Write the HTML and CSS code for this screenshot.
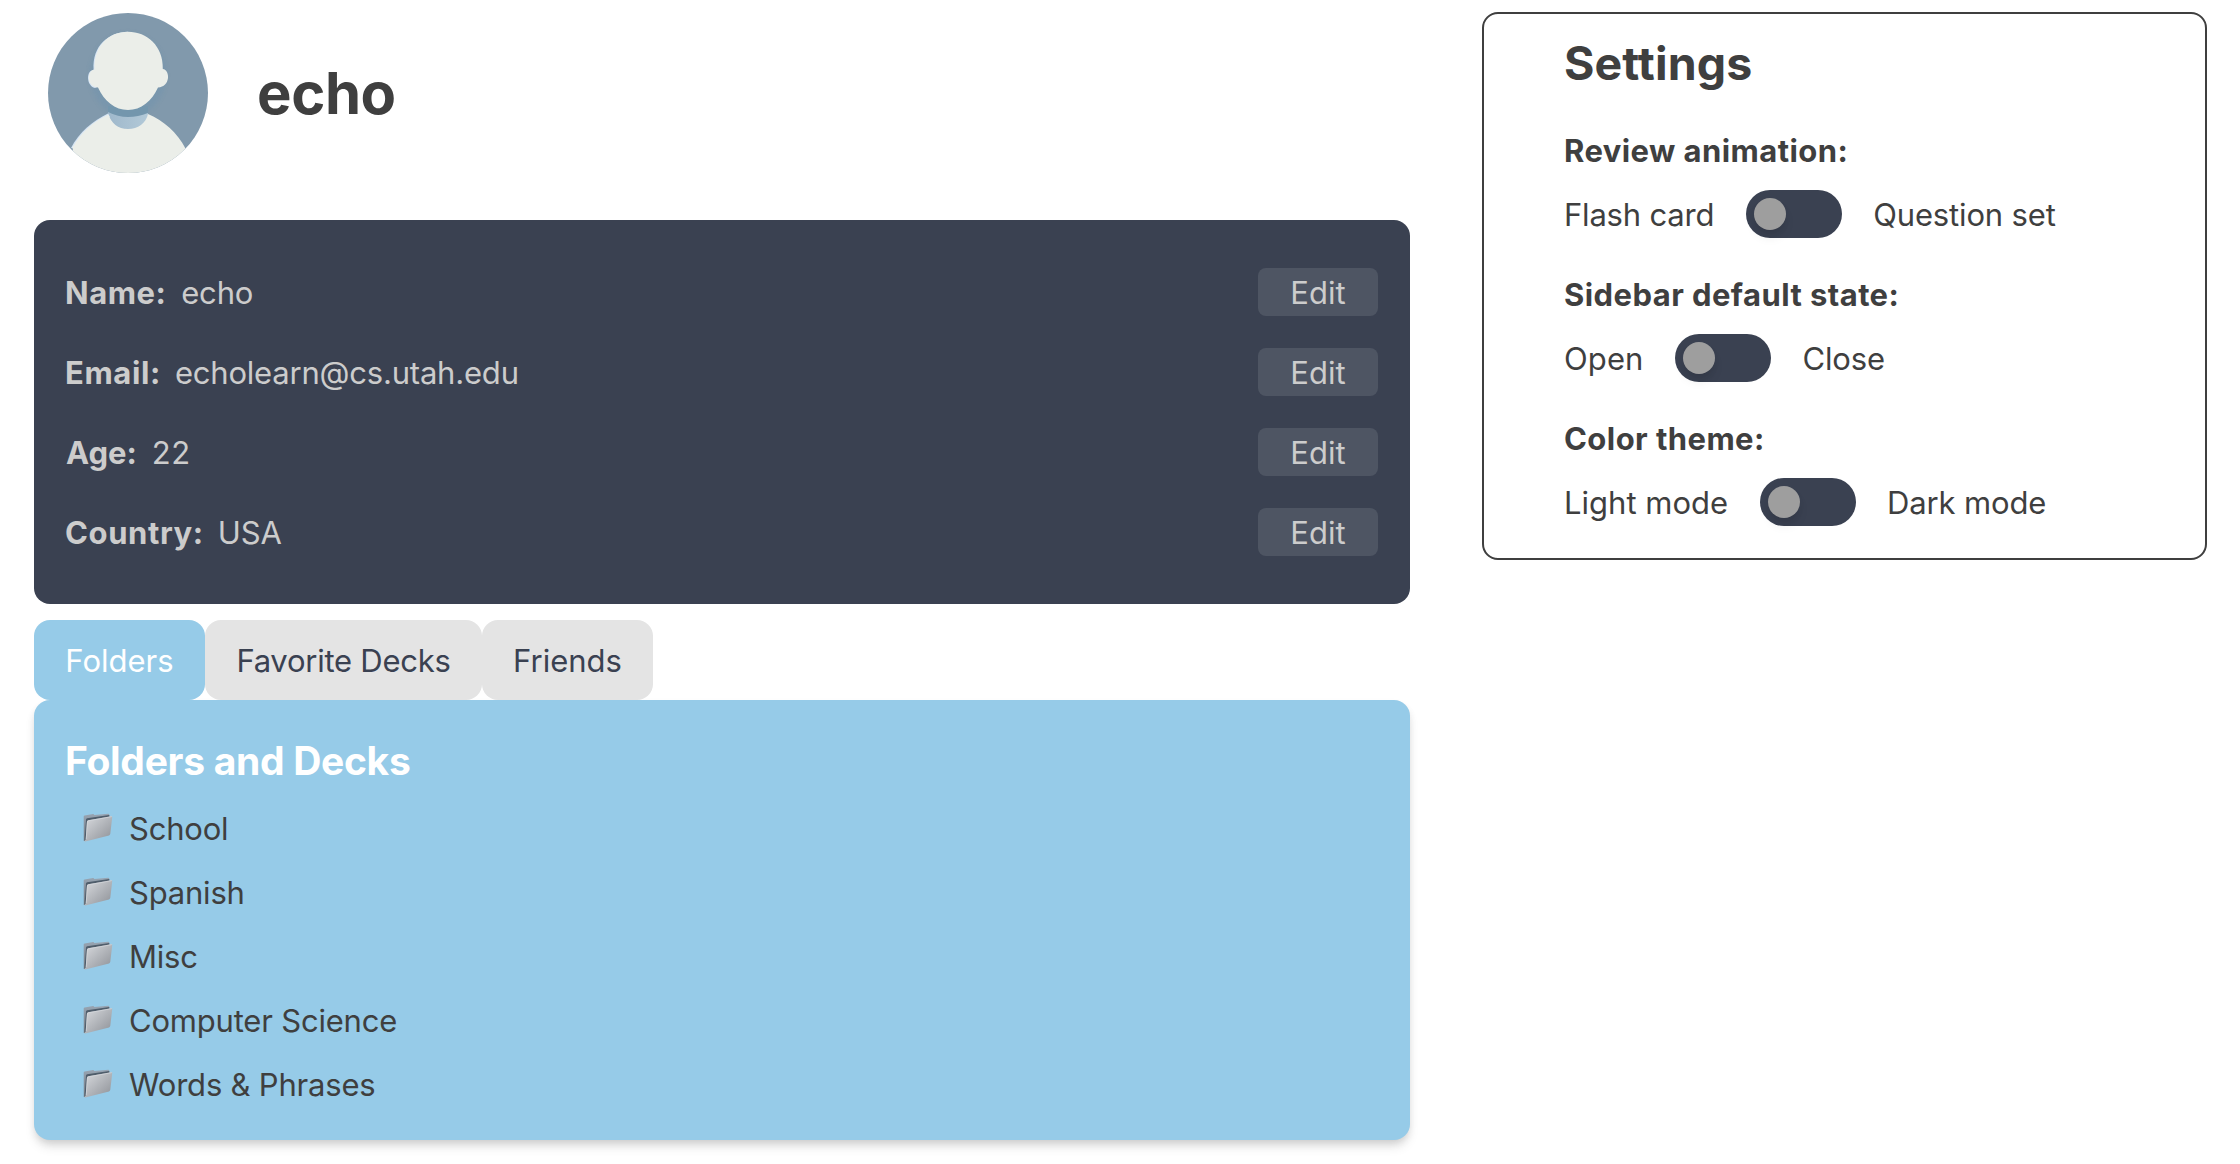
FILE: index.html
```html
<!DOCTYPE html>
<html lang="en">
<head>
<meta charset="utf-8">
<title>Profile</title>
<link rel="stylesheet" href="styles.css">
</head>
<body>
<svg class="defs" aria-hidden="true">
  <defs>
    <linearGradient id="front" x1="0" y1="0" x2="1" y2="1">
      <stop offset="0" stop-color="#d9dbdf"/><stop offset=".5" stop-color="#b2b5ba"/><stop offset="1" stop-color="#8d9096"/>
    </linearGradient>
    <linearGradient id="back" x1="0" y1="0" x2="0" y2="1">
      <stop offset="0" stop-color="#98a5b3"/><stop offset="1" stop-color="#70767e"/>
    </linearGradient>
    <symbol id="folder" viewBox="0 0 30 30">
      <path fill="url(#back)" d="M.7 3.6Q.7 2.7 1.6 2.5L10 1.1Q11 1 11.3 2L25.2.8Q26.3.8 26.3 2V6L4 27.8.8 28Z"/>
      <path fill="#4f5d6b" d="M3 6.500Q3.100 5.500 4.200 5.200L26.300 2V5L5 10 3.200 27H1.600Z"/>
      <path fill="url(#front)" d="M4 8.600Q4.100 7.600 5.100 7.300L28.300 3.200Q29.400 3.100 29.200 4.200L27.300 20.800Q27.100 22 26 22.400L2.200 28.600Q1.200 28.800 1.900 27.600 2.600 27 2.800 25.600Z"/>
      <path fill="none" stroke="#d5d8dc" stroke-width=".7" d="M3.200 26 4.400 8.700Q4.500 8 5.400 7.800L28.800 3.600"/>
    </symbol>
  </defs>
</svg>
<div class="page">
  <main class="main">
    <header class="profile">
      <svg class="avatar" viewBox="0 0 160 160">
        <defs>
          <clipPath id="round"><circle cx="80" cy="80" r="80"/></clipPath>
          <linearGradient id="neck" x1="0" y1="0" x2="1" y2="0"><stop offset="0" stop-color="#9fb8cb"/><stop offset="1" stop-color="#b2c9d8"/></linearGradient>
          <filter id="soft" x="-20%" y="-20%" width="140%" height="140%"><feGaussianBlur stdDeviation="2"/></filter>
        </defs>
        <g clip-path="url(#round)">
          <rect width="160" height="160" fill="#8199ac"/>
          <ellipse cx="80" cy="62" rx="38" ry="42" fill="#6d93af" opacity=".4" filter="url(#soft)"/>
          <path fill="url(#neck)" d="M60 98H100V103C98 111 90 117 80 117S62 111 60 103Z"/>
          <path fill="#7396ad" d="M60 93H100V100Q90 104 80 104T60 99Z"/>
          <path fill="#d5e4f4" d="M23 135C31 119 45 108 60 100.500L62 104 30 136Z"/>
          <path fill="#ebeee9" d="M24.500 134.500C33 119 46 108 60.500 101.500C63 110 70 116 80 116S98 110 100 101C116 108 129 119 137.500 135.500L130 170H30Z"/>
          <path fill="#d5e4f4" d="M45.600 57C44 32 61 19 80 18.700L79 60 47 75C38 73 38 57 45.600 57Z"/>
          <path fill="#ebeee9" d="M46.500 56.500C45.500 33 61 18.700 80 18.700S115.500 33 114.800 56C122.500 57 122.500 74 110 74.500C104 88 93 97 80 97S56 88 50 74.500C38 74 39 57 46.500 56.500Z"/>
        </g>
      </svg>
      <h1 class="username">echo</h1>
    </header>

    <section class="info">
      <div class="info-row"><div class="field"><b class="wide">Name:</b><span>echo</span></div><button class="edit">Edit</button></div>
      <div class="info-row"><div class="field"><b>Email:</b><span>echolearn@cs.utah.edu</span></div><button class="edit">Edit</button></div>
      <div class="info-row"><div class="field"><b class="tight">Age:</b><span class="number">22</span></div><button class="edit">Edit</button></div>
      <div class="info-row"><div class="field"><b>Country:</b><span>USA</span></div><button class="edit">Edit</button></div>
    </section>

    <nav class="tabs">
      <button class="tab active">Folders</button>
      <button class="tab favorites">Favorite Decks</button>
      <button class="tab">Friends</button>
    </nav>

    <section class="panel">
      <h2 class="panel-title">Folders and Decks</h2>
      <ul class="folders">
        <li><svg class="icon"><use href="#folder"/></svg>School</li>
        <li><svg class="icon"><use href="#folder"/></svg>Spanish</li>
        <li><svg class="icon"><use href="#folder"/></svg>Misc</li>
        <li><svg class="icon"><use href="#folder"/></svg>Computer Science</li>
        <li><svg class="icon"><use href="#folder"/></svg>Words &amp; Phrases</li>
      </ul>
    </section>
  </main>

  <aside class="settings">
    <h2 class="settings-title">Settings</h2>
    <div class="setting">
      <h3>Review animation:</h3>
      <div class="choice"><span>Flash card</span><i class="switch"></i><span class="second">Question set</span></div>
    </div>
    <div class="setting">
      <h3>Sidebar default state:</h3>
      <div class="choice"><span class="open">Open</span><i class="switch"></i><span class="second">Close</span></div>
    </div>
    <div class="setting">
      <h3>Color theme:</h3>
      <div class="choice"><span class="light">Light mode</span><i class="switch"></i><span class="second">Dark mode</span></div>
    </div>
  </aside>
</div>
</body>
</html>
```
FILE: styles.css
```css
* { box-sizing: border-box; margin: 0; padding: 0; }
body { background: #fff; color: #3f3f3f; font: 400 31px/47px Inter, "Liberation Sans", sans-serif; letter-spacing: -0.2px; }
button { border: 0; font: inherit; letter-spacing: inherit; color: inherit; }
.defs { display: block; width: 0; height: 0; }
.page { display: flex; align-items: flex-start; gap: 72px; min-height: 100vh; padding: 12px 33px 0 34px; }
.main { width: 1376px; }

.profile { display: flex; align-items: center; gap: 49px; height: 208px; padding: 0 14px 46px; }
.avatar { width: 160px; height: 160px; flex: none; }
.username { font-size: 58px; line-height: 80px; letter-spacing: -0.4px; }

.info { display: flex; flex-direction: column; gap: 32px; height: 384px; padding: 48px 32px 0 31px; border-radius: 16px; background: #3a4151; color: #ccc; }
.info-row { display: flex; justify-content: space-between; height: 48px; }
.field { display: flex; gap: 14px; padding-top: 1px; }
.field b { letter-spacing: 0.6px; }
.field b.wide { letter-spacing: 0.5px; padding-right: 1px; }
.field b.tight { letter-spacing: 0; padding: 0 1px; }
.number { letter-spacing: 0.6px; }
.edit { width: 120px; height: 48px; padding-top: 1px; border-radius: 8px; background: #4e5563; letter-spacing: 0; }

.tabs { display: flex; padding-top: 16px; }
.tab { width: 171px; height: 80px; padding-top: 1px; border-radius: 16px; background: #e4e4e4; color: #3a4151; line-height: 79px; letter-spacing: 0; }
.tab.favorites { width: 277px; letter-spacing: -0.25px; }
.tab.active { background: #96cbe8; color: #fff; }

.panel { height: 440px; padding: 32px 32px 24px 31px; border-radius: 16px; background: #96cbe8; box-shadow: 0 8px 12px -2px rgba(0, 0, 0, .12), 0 4px 8px -2px rgba(0, 0, 0, .12); }
.panel-title { height: 64px; color: #fff; font-size: 39px; line-height: 57px; letter-spacing: -0.3px; }
.folders { list-style: none; }
.folders li { display: flex; align-items: flex-start; height: 64px; padding: 1px 0 0 18px; line-height: 63px; }
.icon { width: 30px; height: 30px; margin: 16px 16px 0 0; flex: none; }

.settings { width: 725px; height: 548px; padding: 17px 0 0 80px; border: 2px solid #3f3f3f; border-radius: 16px; }
.settings-title { margin-bottom: 31px; font-size: 46.5px; line-height: 64px; letter-spacing: 0.1px; }
.setting { padding-bottom: 32px; }
.setting h3 { height: 48px; padding-top: 1px; margin-bottom: 16px; font-size: 31px; letter-spacing: 0.43px; }
.choice { display: flex; height: 48px; line-height: 49px; }
.second { letter-spacing: -0.15px; }
.open { letter-spacing: 0.1px; }
.light { letter-spacing: 0; }
.switch { width: 96px; height: 48px; margin: 0 31px 0 32px; padding: 8px; border-radius: 24px; background: #3a4151; }
.switch::before { content: ""; display: block; width: 32px; height: 32px; border-radius: 50%; background: #9e9e9e; box-shadow: 0 8px 12px -2px rgba(0, 0, 0, .1), 0 4px 8px -2px rgba(0, 0, 0, .06); }
```
